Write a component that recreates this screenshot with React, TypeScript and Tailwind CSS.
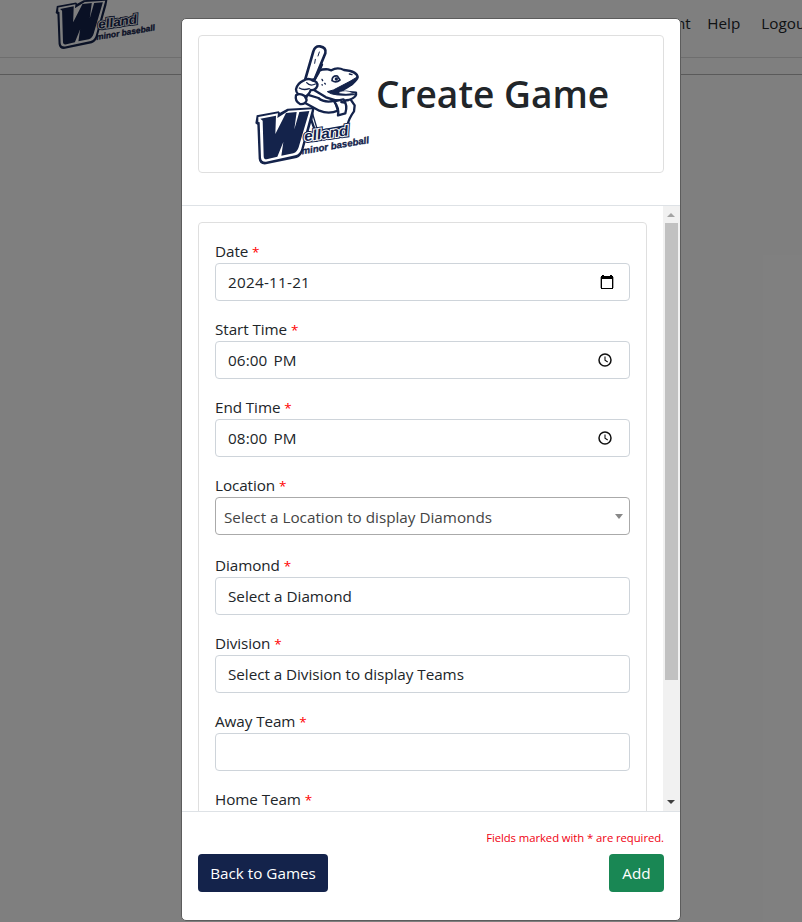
import React from 'react';

const NAVY = '#14234b';

function Wordmark() {
  return (
    <g>
      <path d="M20 226 L86 214 L90 218 L112 206 L194 202 L190 224 L160 330 Q154 350 140 354 L48 373 Q28 375 26 356 L22 254 L16 250 Z" fill={NAVY} />
      <path d="M25 231 L84 220 L82 234 L116 212 L186 208 L154 326 Q150 342 136 346 L48 365 Q34 366 33 353 L29 247 L25 246 Z" fill="#fff" />
      <path d="M31 236 L78 227 L76 282 L108 219 L140 216 L133 268 L148 216 L178 213 L146 322 Q142 336 130 340 L94 347 L100 306 L82 350 L50 358 Q41 359 41 348 L38 242 Z" fill={NAVY} />
      <g fontFamily="'Liberation Sans', Arial, sans-serif" fontWeight="700" fontStyle="italic" fill={NAVY}>
        <text transform="translate(164 304) rotate(-8)" fontSize="43" textLength="134" lengthAdjust="spacingAndGlyphs" stroke={NAVY} strokeWidth="12">elland</text>
        <text transform="translate(164 304) rotate(-8)" fontSize="43" textLength="134" lengthAdjust="spacingAndGlyphs" stroke="#fff" strokeWidth="6">elland</text>
        <text transform="translate(164 304) rotate(-8)" fontSize="43" textLength="134" lengthAdjust="spacingAndGlyphs">elland</text>
        <text transform="translate(156 343) rotate(-9.5)" fontSize="28" textLength="205" lengthAdjust="spacingAndGlyphs" stroke={NAVY} strokeWidth="1">minor baseball</text>
      </g>
    </g>
  );
}

function Mascot() {
  return (
    <g fill="#fff" stroke={NAVY} strokeWidth="7" strokeLinejoin="round" strokeLinecap="round">
      {/* torso */}
      <path d="M186 205 L184 240 L196 275 L292 258 Q296 235 312 214 L314 196 L300 176 L262 178 Z" />
      <path d="M188 222 L200 262" fill="none" strokeWidth="4" />
      {/* head, upper jaw and lower jaw */}
      <path d="M190 104 Q206 86 234 88 L244 91 Q262 80 282 90 Q322 94 323 112 Q318 128 270 154 L318 158 Q322 172 296 180 Q262 186 228 172 L192 150 Z" />
      <path d="M323 110 L300 124 L250 150 L232 155 Q250 170 314 164 L270 152 L308 134 Z" fill={NAVY} strokeWidth="3" />
      <path d="M268 156 Q290 148 308 159 Q290 165 268 160 Z" strokeWidth="1" />
      <path d="M246 122 Q246 106 262 108 L270 120 Q258 130 246 122 Z" strokeWidth="5" />
      <circle cx="259" cy="117" r="5" fill={NAVY} stroke="none" />
      <path d="M298 102 L306 104 M216 118 L218 122 M224 130 L226 132 M216 134 L217 135" fill="none" strokeWidth="4" />
      {/* bat */}
      <path d="M190 34 Q196 17 210 19 Q230 22 226 40 L194 118 L164 124 Z" strokeWidth="8" />
      <path d="M216 74 L192 122 L206 98 Z" fill={NAVY} />
      <path d="M208 36 L204 48 M196 58 L194 70" fill="none" strokeWidth="3" />
      {/* arms */}
      <path d="M172 164 L205 174 Q224 190 254 182 L264 212 Q236 224 208 212 L164 188 Z" />
      <path d="M252 184 L280 178 Q294 196 286 220 L264 226 Q268 204 252 184 Z" />
      <path d="M274 186 L284 188" fill="none" />
      {/* hands */}
      <path d="M160 122 Q176 112 188 122 Q204 124 202 138 Q196 152 182 150 Q178 164 164 170 Q138 166 138 148 Q142 130 160 122 Z" />
      <path d="M170 128 Q180 140 196 132 M148 144 Q160 152 178 146" fill="none" strokeWidth="4" />
      <path d="M138 166 Q150 158 164 168 L170 180 Q166 194 150 192 Q134 184 138 166 Z" />
    </g>
  );
}

function Logo() {
  return (
    <svg viewBox="0 0 375 390" className="h-[130px] w-[125px] shrink-0">
      <Mascot />
      <Wordmark />
    </svg>
  );
}

function NavBar() {
  return (
    <header className="h-[58px] overflow-hidden whitespace-nowrap border-b border-[#dcdcdc] text-[15.25px] leading-6 text-[#212529]">
      <div className="flex w-[860px] items-start pl-[51px]">
        <svg viewBox="0 178 375 212" className="h-[61.8px] w-[109.3px] shrink-0 -mt-2">
          <Wordmark />
        </svg>
        <nav className="flex pt-[11px] pl-[25px]">
          <a className="w-[64px]">Admin</a>
          <a className="w-[70px]">Games</a>
          <a className="w-[60px]">Teams</a>
          <a className="w-[69px]">Clinics</a>
          <a className="w-[62px]">Coach</a>
          <a className="w-[124px]">Volunteers</a>
          <a className="w-[73px] tracking-[-0.2px]">Account</a>
          <a className="w-[54px]">Help</a>
          <a>Logout</a>
        </nav>
      </div>
    </header>
  );
}

function CalendarIcon() {
  return (
    <svg viewBox="0 0 14 15" className="mr-[3px] h-[15px] w-[14px]" shapeRendering="crispEdges">
      <path d="M2 0h2v2H2zM10 0h2v2h-2zM1 1h12v3H1zM1 4h1v9H1zM12 4h1v9h-1zM1 13h12v1H1z" fill="#000" />
      <path d="M0 2h1v11H0zM13 2h1v11h-1z" fill="#000" fillOpacity="0.35" />
    </svg>
  );
}

function ClockIcon() {
  return (
    <svg viewBox="0 0 14 14" className="mr-[5px] h-[14px] w-[14px]" fill="none" stroke="#111">
      <circle cx="7" cy="7" r="6" strokeWidth="1.5" />
      <path d="M7 3.4V7.2L9.7 9" strokeWidth="1.1" />
    </svg>
  );
}

type FieldProps = {
  label: string;
  value?: string;
  tracking?: string;
  icon?: React.ReactNode;
};

function Field({ label, value, tracking = '', icon }: FieldProps) {
  return (
    <div className="mb-4">
      <Label text={label} />
      <div className="flex h-[38px] items-center justify-between rounded border border-[#ced4da] px-3">
        <span className={tracking}>{value}</span>
        {icon}
      </div>
    </div>
  );
}

function Label({ text }: { text: string }) {
  return (
    <div className="h-6 tracking-[-0.08px]">
      {text} <span className="text-[13.5px] text-[#ff0000]">*</span>
    </div>
  );
}

export default function App() {
  return (
    <div className="relative h-[922px] w-[802px] overflow-hidden bg-white font-['Open_Sans',sans-serif]">
      <NavBar />
      <div className="h-[17px] border-b border-[#b4b4b4]" />

      <div className="absolute inset-0 flex items-start bg-black/50 pt-[18px] pl-[181px]">
        <div className="flex h-[903px] w-[500px] flex-col overflow-hidden rounded-[5px] border border-[#5c5c5c] bg-white text-[15.25px] leading-6 text-[#212529]">
          <div className="h-[187px] shrink-0 border-b border-[#dee2e6] p-4">
            <div className="flex h-[138px] rounded border border-[#dfdfdf] pt-1 pl-[51px]">
              <Logo />
              <h1 className="pt-[30px] pl-px text-[37.1px] leading-[48px] font-semibold text-[#212529]">Create Game</h1>
            </div>
          </div>

          <div className="flex h-[605px] shrink-0 overflow-hidden">
            <div className="flex-1 px-4 pt-4">
              <div className="h-[700px] rounded border border-[#dfdfdf] p-4">
                <Field label="Date" value="2024-11-21" tracking="tracking-[0.25px]" icon={<CalendarIcon />} />
                <Field label="Start Time" value="06:00 PM" tracking="tracking-[0.1px] [word-spacing:2px]" icon={<ClockIcon />} />
                <Field label="End Time" value="08:00 PM" tracking="tracking-[0.1px] [word-spacing:2px]" icon={<ClockIcon />} />
                <div className="mb-[18px]">
                  <Label text="Location" />
                  <div className="flex h-[38px] items-center justify-between rounded border border-[#aaa] pr-1.5 pl-2 pt-0.5 text-[#444]">
                    <span>Select a Location to display Diamonds</span>
                    <svg viewBox="0 0 8 5" className="mb-0.5 h-[5px] w-2">
                      <path d="M0 0H8L4 5Z" fill="#888" />
                    </svg>
                  </div>
                </div>
                <Field label="Diamond" value="Select a Diamond" />
                <Field label="Division" value="Select a Division to display Teams" tracking="tracking-[-0.05px]" />
                <Field label="Away Team" />
                <Field label="Home Team" />
              </div>
            </div>
            <div className="flex w-[17px] flex-col items-center bg-[#f1f1f1]">
              <div className="flex h-[17px] items-center pr-px">
                <svg viewBox="0 0 8 4" className="h-1 w-2">
                  <path d="M0 4H8L4 0Z" fill="#a3a3a3" />
                </svg>
              </div>
              <div className="h-[457px] w-[13px] bg-[#c1c1c1]" />
              <div className="flex-1" />
              <div className="flex h-[17px] items-center pr-px pb-0.5">
                <svg viewBox="0 0 8 4" className="h-1 w-2">
                  <path d="M0 0H8L4 4Z" fill="#404040" />
                </svg>
              </div>
            </div>
          </div>

          <div className="flex-1 border-t border-[#dee2e6] px-4 pt-[17px]">
            <div className="text-right text-[11.3px] leading-[18px] tracking-[-0.06px] text-[#f00010]">Fields marked with * are required.</div>
            <div className="mt-[7px] flex justify-between text-white">
              <button className="h-[38px] w-[130px] rounded bg-[#14234b] text-[15.25px] font-medium">Back to Games</button>
              <button className="h-[38px] w-[55px] rounded bg-[#198754] text-[15.25px] font-medium">Add</button>
            </div>
          </div>
        </div>
      </div>
    </div>
  );
}
